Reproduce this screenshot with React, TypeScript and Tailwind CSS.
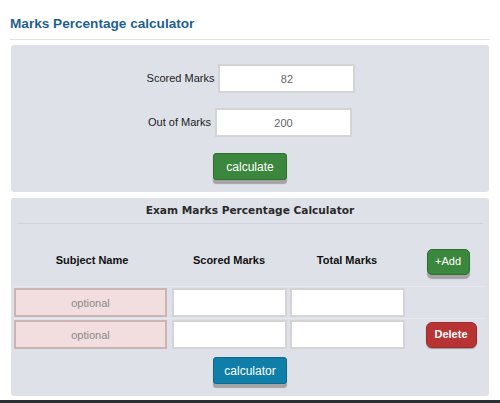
import { useState } from "react";

const font = { fontFamily: '"Liberation Sans", Arial, sans-serif' };

interface SubjectRow {
  name: string;
  scored: string;
  total: string;
}

export default function App() {
  const [scored, setScored] = useState("82");
  const [outOf, setOutOf] = useState("200");
  const [rows, setRows] = useState<SubjectRow[]>([
    { name: "", scored: "", total: "" },
    { name: "", scored: "", total: "" },
  ]);

  function addRow() {
    setRows([...rows, { name: "", scored: "", total: "" }]);
  }

  function deleteRow() {
    if (rows.length > 1) setRows(rows.slice(0, -1));
  }

  return (
    <div className="relative h-[403px] w-[500px] overflow-hidden bg-white" style={font}>
      <div className="px-[10px] pt-[15px]">
        <h1 className="text-[13.6px] font-bold leading-[17px] text-[#1f5f8f]">
          Marks Percentage calculator
        </h1>
        <div className="mt-[7px] h-px bg-[#e3e3e3]" />
      </div>

      {/* simple calculator */}
      <div className="mx-[11px] mt-[5px] flex h-[147px] flex-col items-center rounded-[3px] bg-[#dfe1e8] pt-[19px]">
        <div className="flex items-center gap-[4px] pl-[2px]">
          <label className="text-[11px] text-[#222]">Scored Marks</label>
          <input
            value={scored}
            onChange={(e) => setScored(e.target.value)}
            className="h-[29px] w-[137px] border-2 border-[#d4d4d4] bg-white text-center text-[11px] text-[#666] outline-none"
          />
        </div>
        <div className="mt-[15px] flex items-center gap-[4px]">
          <label className="text-[11px] text-[#222]">Out of Marks</label>
          <input
            value={outOf}
            onChange={(e) => setOutOf(e.target.value)}
            className="h-[29px] w-[137px] border-2 border-[#d4d4d4] bg-white text-center text-[11px] text-[#666] outline-none"
          />
        </div>
        <button className="mt-[16px] h-[27px] w-[74px] rounded-[3px] border border-[#2f6f32] bg-[#3b873e] text-[12px] text-white shadow-[0_4px_1px_#a3a3a3]">
          calculate
        </button>
      </div>

      {/* exam table */}
      <div className="mx-[11px] mt-[6px] flex h-[198px] flex-col rounded-[3px] bg-[#dfe1e8] px-[3px]">
        <div className="mx-[3px] flex h-[26px] items-center justify-center border-b border-[#d1d4da] pt-[1px]">
          <h2
            className="text-[10.6px] font-bold text-[#2a2a2a]"
            style={{ fontFamily: '"DejaVu Sans", Verdana, sans-serif' }}
          >
            Exam Marks Percentage Calculator
          </h2>
        </div>

        <div className="grid grid-cols-[156px_118px_118px_1fr]">
          <div className="flex h-[62px] items-center justify-center pt-[10px] text-[11px] font-bold text-[#111]">
            Subject Name
          </div>
          <div className="flex h-[62px] items-center justify-center pt-[10px] text-[11px] font-bold text-[#111]">
            Scored Marks
          </div>
          <div className="flex h-[62px] items-center justify-center pt-[10px] text-[11px] font-bold text-[#111]">
            Total Marks
          </div>
          <div className="flex h-[62px] items-center justify-center pl-[4px] pt-[13px]">
            <button
              onClick={addRow}
              className="h-[26px] w-[43px] rounded-[5px] border border-[#2f6f32] bg-[#3b873e] text-[11px] text-white shadow-[0_4px_1px_#a3a3a3]"
            >
              +Add
            </button>
          </div>

          {rows.map((row, i) => (
            <div key={i} className="contents">
              <div className="border-t border-[#e6e8ed] py-[1px] pr-[3px]">
                <input
                  placeholder="optional"
                  value={row.name}
                  onChange={(e) => {
                    const next = [...rows];
                    next[i] = { ...row, name: e.target.value };
                    setRows(next);
                  }}
                  className="block h-[29px] w-[153px] border-2 border-[#cbb4b4] bg-[#f2dede] text-center text-[11px] text-[#666] outline-none placeholder:text-[#8a8a8a]"
                />
              </div>
              <div className="border-t border-[#e6e8ed] py-[1px] pl-[2px]">
                <input
                  value={row.scored}
                  onChange={(e) => {
                    const next = [...rows];
                    next[i] = { ...row, scored: e.target.value };
                    setRows(next);
                  }}
                  className="block h-[29px] w-[115px] border-2 border-[#d4d4d4] bg-white text-center text-[11px] outline-none"
                />
              </div>
              <div className="border-t border-[#e6e8ed] py-[1px] pl-[2px]">
                <input
                  value={row.total}
                  onChange={(e) => {
                    const next = [...rows];
                    next[i] = { ...row, total: e.target.value };
                    setRows(next);
                  }}
                  className="block h-[29px] w-[115px] border-2 border-[#d4d4d4] bg-white text-center text-[11px] outline-none"
                />
              </div>
              <div className="flex items-center justify-center border-t border-[#e6e8ed] pl-[10px]">
                {i === rows.length - 1 && rows.length > 1 ? (
                  <button
                    onClick={deleteRow}
                    className="h-[26px] w-[51px] rounded-[6px] border border-[#9e2a2b] bg-[#b83334] text-[11px] font-bold text-white shadow-[0_1px_1px_#999]"
                  >
                    Delete
                  </button>
                ) : null}
              </div>
            </div>
          ))}
        </div>

        <div className="flex justify-center pt-[7px]">
          <button className="h-[27px] w-[74px] rounded-[3px] border border-[#0b6a8d] bg-[#0f7ea8] text-[12px] text-white shadow-[0_4px_1px_#a3a3a3]">
            calculator
          </button>
        </div>
      </div>

      <div className="absolute bottom-0 left-0 h-[3px] w-full bg-[#2b2f33]" />
    </div>
  );
}
